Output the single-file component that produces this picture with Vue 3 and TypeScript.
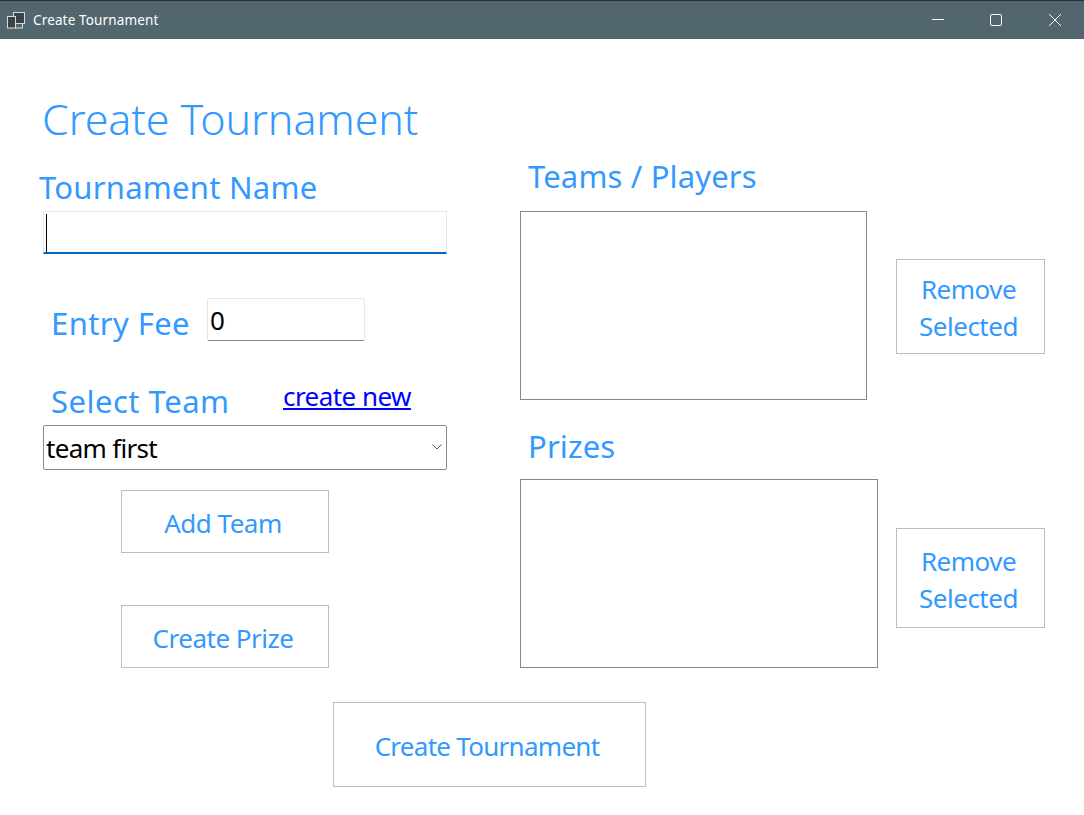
<script setup lang="ts">
const teamList: string[] = []
const prizeList: string[] = []
</script>

<template>
  <div class="window">
    <header class="titlebar">
      <div class="title-left">
        <svg class="app-icon" width="18" height="17" viewBox="0 0 18 17" fill="none">
          <rect x="6.5" y="0.5" width="11" height="11" fill="#3c4346" stroke="#d6dbdd" />
          <rect x="0.5" y="4.5" width="8" height="11.5" fill="#3c4346" stroke="#d6dbdd" />
          <rect x="8.5" y="11.5" width="7" height="4.5" fill="#51666f" stroke="#d6dbdd" />
        </svg>
        <span class="title-text">Create Tournament</span>
      </div>
      <div class="controls">
        <svg width="14" height="14" viewBox="0 0 14 14" fill="none"><path d="M1 6.5H13" stroke="#fff" /></svg>
        <svg class="max-icon" width="14" height="14" viewBox="0 0 14 14" fill="none"><rect x="1.5" y="1.5" width="11" height="11" rx="1.5" stroke="#fff" /></svg>
        <svg width="14" height="14" viewBox="0 0 14 14" fill="none"><path d="M1 1L13 13M13 1L1 13" stroke="#fff" /></svg>
      </div>
    </header>

    <main class="content">
      <div class="columns">
        <section class="left">
          <h1 class="page-title">Create Tournament</h1>
          <label class="label name-label">Tournament Name</label>
          <div class="field name-field"><span class="caret"></span><input class="plain-input" type="text" /></div>

          <div class="fee-row">
            <label class="label fee-label">Entry Fee</label>
            <input class="fee-input" type="text" value="0" />
          </div>

          <div class="team-row">
            <label class="label team-label">Select Team</label>
            <a class="link" href="#">create new</a>
          </div>
          <div class="select-box">
            <select class="select">
              <option>team first</option>
            </select>
            <svg class="chevron" width="10" height="6" viewBox="0 0 10 6" fill="none"><path d="M0.5 0.5L5 5L9.5 0.5" stroke="#555" /></svg>
          </div>

          <button class="btn add-team">Add Team</button>
          <button class="btn create-prize">Create Prize</button>
        </section>

        <section class="right">
          <label class="label teams-label">Teams / Players</label>
          <div class="list-row teams-row">
            <ul class="listbox teams-list"><li v-for="t in teamList" :key="t">{{ t }}</li></ul>
            <button class="btn remove remove-team">Remove Selected</button>
          </div>
          <label class="label prizes-label">Prizes</label>
          <div class="list-row prizes-row">
            <ul class="listbox prizes-list"><li v-for="p in prizeList" :key="p">{{ p }}</li></ul>
            <button class="btn remove remove-prize">Remove Selected</button>
          </div>
        </section>
      </div>
      <div class="footer">
        <button class="btn create">Create Tournament</button>
      </div>
    </main>
  </div>
</template>

<style>
html, body { margin: 0; background: #fff; }
</style>

<style scoped>
.window {
  width: 1084px;
  height: 815px;
  overflow: hidden;
  background: #fff;
  font-family: "Noto Sans", "Open Sans", sans-serif;
  color: #3399ff;
  box-sizing: border-box;
}
.titlebar {
  height: 39px;
  box-sizing: border-box;
  border-top: 1px solid #2c2f31;
  background: #51666f;
  display: flex;
  align-items: center;
  justify-content: space-between;
  padding: 0 22px 0 7px;
}
.title-left { display: flex; align-items: center; gap: 8px; }
.title-text { color: #fff; font-size: 13.5px; letter-spacing: 0.15px; }
.app-icon { display: block; margin-top: 1px; }
.controls { display: flex; gap: 44px; align-items: center; }
.controls svg { display: block; }
.max-icon { margin-right: 1px; }

.content { display: flex; flex-direction: column; }
.columns { display: flex; height: 629px; }
.left { width: 520px; box-sizing: border-box; padding-left: 43px; display: flex; flex-direction: column; align-items: flex-start; position: relative; }
.right { flex: 1; display: flex; flex-direction: column; align-items: flex-start; }

.page-title {
  margin: 52px 0 0 -1px;
  font-size: 43px;
  line-height: 56px;
  font-weight: 300;
  letter-spacing: -0.1px;
  color: #3399ff;
  font-family: "Noto Sans", "Open Sans", sans-serif;
}
.label { font-size: 31px; line-height: 38px; letter-spacing: 0.15px; white-space: nowrap; display: block; }
.name-label { margin: 21px 0 0 -4px; letter-spacing: 0.25px; }
.field {
  margin-top: 5px;
  width: 404px;
  height: 43px;
  box-sizing: border-box;
  border: 1px solid #e6e9ec;
  border-bottom: 2px solid #0067c0;
  position: relative;
}
.plain-input { width: 100%; height: 100%; box-sizing: border-box; border: 0; outline: 0; background: transparent; padding: 0; }
.caret { position: absolute; left: 2px; top: 2px; bottom: 0; width: 1px; background: #000; }

.fee-row { display: flex; align-items: center; margin: 44px 0 0 8px; gap: 17px; height: 43px; }
.fee-label { margin-top: 6px; letter-spacing: 0.4px; }
.fee-input {
  width: 158px;
  height: 43px;
  box-sizing: border-box;
  border: 1px solid #e8e8e8;
  border-bottom: 1px solid #8a8a8a;
  border-radius: 2px;
  outline: 0;
  padding: 0 2px;
  font: 26px "Noto Sans", sans-serif;
  color: #000;
}
.team-row { display: flex; align-items: flex-start; margin: 41px 0 0 8px; height: 43px; }
.team-label { width: 232px; letter-spacing: 0.5px; }
.link { color: #0000ff; font-size: 26px; line-height: 30px; letter-spacing: -0.55px; text-decoration: underline; margin-top: -1px; }

.select-box { width: 404px; height: 45px; position: relative; }
.select {
  width: 100%;
  height: 100%;
  box-sizing: border-box;
  appearance: none;
  background: #fff;
  border: 1px solid #8a8a8a;
  border-radius: 2px;
  outline: 0;
  padding: 0 2px;
  font: 26px "Noto Sans", sans-serif;
  letter-spacing: -0.7px;
  color: #000;
}
.chevron { position: absolute; right: 5px; top: 19px; }

.btn {
  background: #fff;
  border: 1px solid #bdbdbd;
  box-sizing: border-box;
  color: #3399ff;
  font-family: "Noto Sans", "Open Sans", sans-serif;
  font-size: 26px;
  line-height: 37px;
  letter-spacing: -0.5px;
  padding: 3px 4px 0 0;
}
.add-team, .create-prize { width: 208px; height: 63px; margin-left: 78px; }
.add-team { margin-top: 20px; }
.create-prize { margin-top: 52px; }

.teams-label { margin: 118px 0 0 8px; }
.list-row { display: flex; align-items: flex-start; position: relative; }
.listbox { margin: 0; padding: 0; list-style: none; border: 1px solid #828790; box-sizing: border-box; height: 189px; background: #fff; }
.teams-row { margin-top: 16px; width: 525px; height: 189px; }
.teams-list { width: 347px; }
.remove-team { margin-left: 29px; margin-top: 48px; height: 95px; }
.prizes-label { margin: 27px 0 0 8px; }
.prizes-row { margin-top: 14px; }
.prizes-list { width: 358px; }
.remove { width: 149px; }
.remove-prize { margin-left: 18px; margin-top: 49px; height: 100px; }

.footer { display: flex; padding-left: 333px; margin-top: 34px; }
.create { width: 313px; height: 85px; letter-spacing: -0.72px; padding: 4px 5px 0 0; }
</style>
